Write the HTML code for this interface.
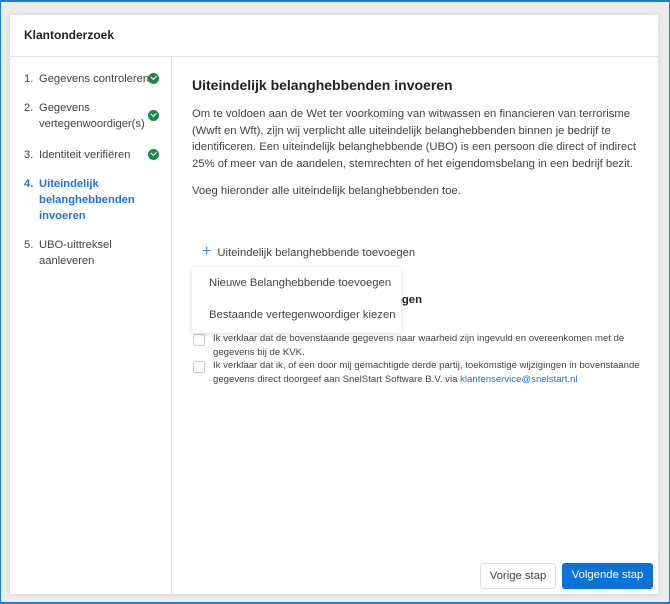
<!DOCTYPE html>
<html><head><style>
*{box-sizing:border-box;margin:0;padding:0}
body{width:670px;height:604px;background:#ececec;font-family:"Liberation Sans",sans-serif;color:#333;position:relative;overflow:hidden}
.frame{position:absolute;left:0;top:0;width:670px;height:604px;border:1px solid #1a7fd4;border-top:2px solid #1a7fd4;border-bottom:2px solid #1a7fd4}
.card{position:absolute;left:10px;top:15px;width:648px;height:579px;background:#fff;box-shadow:0 0 6px rgba(0,0,0,.12)}
.hdr{height:42px;border-bottom:1px solid #e2e2e2;padding:13px 14px;font-weight:bold;font-size:12px;color:#222}
.side{position:absolute;left:0;top:42px;width:162px;bottom:0;border-right:1px solid #e2e2e2;font-size:11.2px;color:#444}
.st{position:absolute;left:14px;line-height:16px;white-space:nowrap}
.st .n{position:absolute;left:0}
.st .t{position:absolute;left:15px}
.ck{position:absolute;left:138px;width:11px;height:11px;border-radius:50%;background:#1b8a4c}
.ck:after{content:"";position:absolute;left:3px;top:2px;width:4px;height:2.5px;border-left:1.5px solid #fff;border-bottom:1.5px solid #fff;transform:rotate(-45deg)}
.act{color:#1a73d9;font-weight:bold}
.main{position:absolute;left:182px;top:42px;width:450px;font-size:11.3px;color:#444}
h1{position:absolute;top:20px;font-size:14px;color:#222;white-space:nowrap}
p{position:absolute;line-height:16.5px;white-space:nowrap}
.menu{position:absolute;left:182px;top:252px;width:209px;height:66px;background:#fff;box-shadow:0 1px 6px rgba(0,0,0,.15);border-radius:3px;font-size:11.3px;color:#444;white-space:nowrap}
.cb{position:absolute;width:12px;height:12px;border:1px solid #ccc;border-radius:2px}
.sm{font-size:9.6px;line-height:13.5px}
.btn{position:absolute;top:548px;height:26px;font-size:11.3px;border-radius:3px;text-align:center;line-height:24px}
</style></head><body>
<div class="card">
<div class="hdr">Klantonderzoek</div>
<div class="side">
<div class="st" style="top:14px"><span class="n">1.</span><span class="t">Gegevens controleren</span></div><div class="ck" style="top:16px"></div>
<div class="st" style="top:43px"><span class="n">2.</span><span class="t">Gegevens<br>vertegenwoordiger(s)</span></div><div class="ck" style="top:53px"></div>
<div class="st" style="top:90px"><span class="n">3.</span><span class="t">Identiteit verifiëren</span></div><div class="ck" style="top:92px"></div>
<div class="st act" style="top:119px"><span class="n">4.</span><span class="t">Uiteindelijk<br>belanghebbenden<br>invoeren</span></div>
<div class="st" style="top:180px"><span class="n">5.</span><span class="t">UBO-uittreksel<br>aanleveren</span></div>
</div>
<div class="main">
<h1>Uiteindelijk belanghebbenden invoeren</h1>
<p style="top:49px">Om te voldoen aan de Wet ter voorkoming van witwassen en financieren van terrorisme<br>(Wwft en Wft), zijn wij verplicht alle uiteindelijk belanghebbenden binnen je bedrijf te<br>identificeren. Een uiteindelijk belanghebbende (UBO) is een persoon die direct of indirect<br>25% of meer van de aandelen, stemrechten of het eigendomsbelang in een bedrijf bezit.</p>
<p style="top:126px">Voeg hieronder alle uiteindelijk belanghebbenden toe.</p>
<p style="top:187px;left:10px"><span style="color:#4a90e2;font-size:16px;margin-right:6px">+</span>Uiteindelijk belanghebbende toevoegen</p>
<p style="top:235px;left:203px;font-weight:bold;color:#222">ngen</p>
<div class="cb" style="left:1px;top:277px"></div>
<p class="sm" style="top:275px;left:21px">Ik verklaar dat de bovenstaande gegevens naar waarheid zijn ingevuld en overeenkomen met de<br>gegevens bij de KVK.</p>
<div class="cb" style="left:1px;top:304px"></div>
<p class="sm" style="top:302px;left:21px">Ik verklaar dat ik, of een door mij gemachtigde derde partij, toekomstige wijzigingen in bovenstaande<br>gegevens direct doorgeef aan SnelStart Software B.V. via <span style="color:#1a73d9">klantenservice@snelstart.nl</span></p>
</div>
<div class="menu"><div style="position:absolute;left:17px;top:10px">Nieuwe Belanghebbende toevoegen</div><div style="position:absolute;left:17px;top:42px">Bestaande vertegenwoordiger kiezen</div></div>
<div class="btn" style="left:470px;width:76px;border:1px solid #ddd;color:#444">Vorige stap</div>
<div class="btn" style="left:552px;width:91px;background:#0a73d9;color:#fff">Volgende stap</div>
</div>
<div class="frame"></div>
</body></html>
